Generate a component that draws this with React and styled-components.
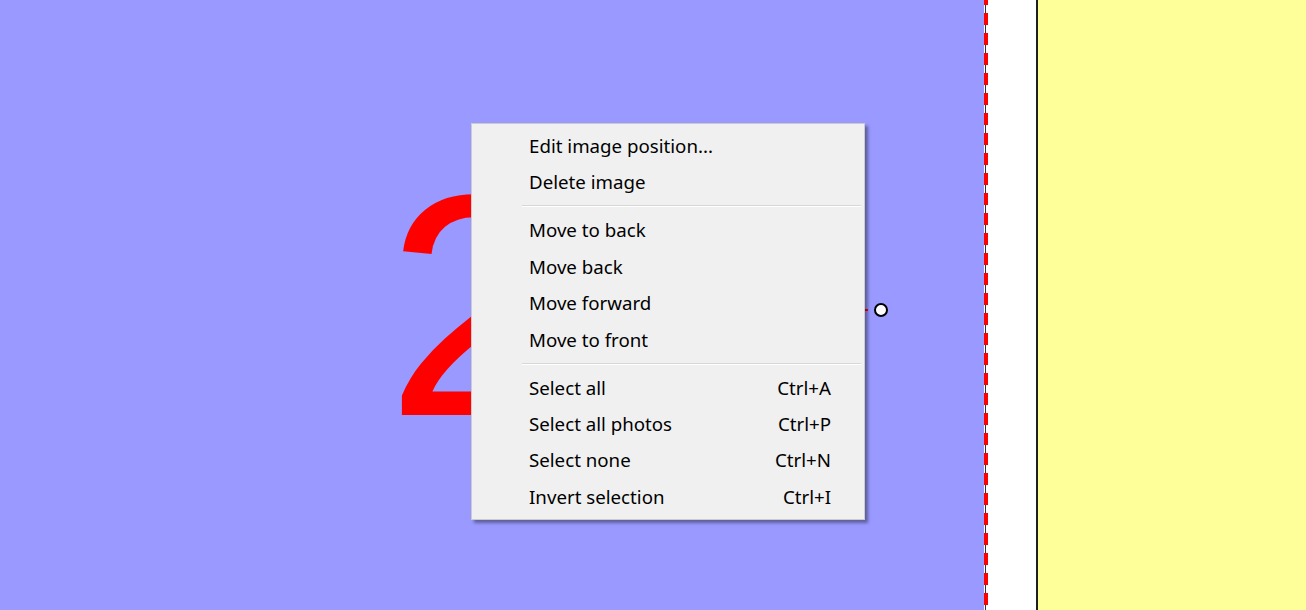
import React from "react";
import styled, { createGlobalStyle } from "styled-components";

const Global = createGlobalStyle`
  html, body { margin: 0; padding: 0; overflow: hidden; }
  body { width: 1306px; height: 610px; font-family: "Noto Sans", "Open Sans", sans-serif; }
`;

const Page = styled.div`
  display: flex;
  width: 1306px;
  height: 610px;
  overflow: hidden;
`;

const Canvas = styled.div`
  position: relative;
  width: 984px;
  flex: none;
  background: #9999ff;
`;

const PageEdge = styled.div`
  width: 4px;
  flex: none;
  position: relative;
  background: repeating-linear-gradient(
    to bottom,
    #ff0000 0px,
    #ff0000 5px,
    transparent 5px,
    transparent 13px,
    #ff0000 13px,
    #ff0000 20px
  );
  &::before {
    content: "";
    position: absolute;
    left: 1px;
    top: 0;
    bottom: 0;
    width: 1px;
    background: #333344;
    z-index: -1;
  }
`;

const Margin = styled.div`
  width: 48px;
  flex: none;
  background: #ffffff;
`;

const Rule = styled.div`
  width: 2px;
  flex: none;
  background: #1e1e1e;
`;

const Spread = styled.div`
  flex: 1;
  background: #ffff99;
`;

const BigDigit = styled.div`
  position: absolute;
  left: 386px;
  top: 148px;
  font-family: "Liberation Sans", Arial, sans-serif;
  font-size: 316px;
  line-height: 1;
  color: #ff0000;
  user-select: none;
`;

const Handle = styled.div`
  position: absolute;
  left: 874px;
  top: 303px;
  width: 10px;
  height: 10px;
  border: 2px solid #000;
  border-radius: 50%;
  background: #fff;
`;

const HandleTick = styled.div`
  position: absolute;
  left: 864px;
  top: 309px;
  width: 4px;
  height: 2px;
  background: #ff0000;
`;

const Menu = styled.div`
  position: absolute;
  left: 471px;
  top: 123px;
  width: 392px;
  padding: 3.8px 0 4px;
  background: #f0f0f0;
  border: 1px solid #cccccc;
  box-shadow: 3px 3px 3px rgba(0, 0, 0, 0.38);
  display: flex;
  flex-direction: column;
`;

const Item = styled.div`
  display: flex;
  align-items: center;
  justify-content: space-between;
  height: 36.4px;
  padding: 0 33px 0 57px;
  font-size: 18.7px;
  line-height: 24px;
  color: #000;
  white-space: nowrap;
`;

const Label = styled.span``;

const Shortcut = styled.span`
  color: #000;
`;

const Separator = styled.div`
  height: 1px;
  margin: 4.8px 3px 4.8px 50px;
  background: #d7d7d7;
  border-bottom: 1px solid #ffffff;
`;

const groups = [
  [
    { label: "Edit image position..." },
    { label: "Delete image" },
  ],
  [
    { label: "Move to back" },
    { label: "Move back" },
    { label: "Move forward" },
    { label: "Move to front" },
  ],
  [
    { label: "Select all", key: "Ctrl+A" },
    { label: "Select all photos", key: "Ctrl+P" },
    { label: "Select none", key: "Ctrl+N" },
    { label: "Invert selection", key: "Ctrl+I" },
  ],
];

export default function App() {
  return (
    <>
      <Global />
      <Page>
        <Canvas>
          <BigDigit>2</BigDigit>
          <HandleTick />
          <Handle />
          <Menu>
            {groups.map((g, gi) => (
              <React.Fragment key={gi}>
                {gi > 0 && <Separator />}
                {g.map((it) => (
                  <Item key={it.label}>
                    <Label>{it.label}</Label>
                    {it.key && <Shortcut>{it.key}</Shortcut>}
                  </Item>
                ))}
              </React.Fragment>
            ))}
          </Menu>
        </Canvas>
        <PageEdge />
        <Margin />
        <Rule />
        <Spread />
      </Page>
    </>
  );
}
